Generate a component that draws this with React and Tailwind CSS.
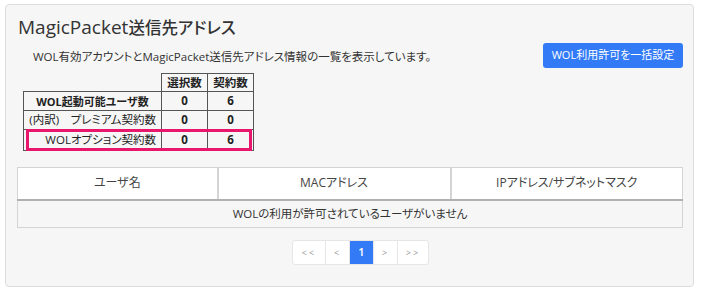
import React from 'react';

const font = { fontFamily: '"Open Sans", "Noto Sans CJK JP", sans-serif', fontFeatureSettings: '"palt"' };

const SummaryTable = () => {
  const rows = [
    { label: 'WOL起動可能ユーザ数', sel: 0, con: 6, cls: 'text-center font-bold text-[11px]' },
    { label: '(内訳)　プレミアム契約数', sel: 0, con: 0, cls: 'text-right pr-[5px]' },
    { label: 'WOLオプション契約数', sel: 0, con: 6, cls: 'text-right pr-[5px]' },
  ];

  return (
    <div className="relative w-fit ml-[6px] mt-[5px]">
      <table className="border-collapse text-[11.5px] text-[#222] leading-none whitespace-nowrap">
        <thead>
          <tr className="h-[18px]">
            <th className="w-[138px]"></th>
            <th className="w-[46px] border border-[#555] font-bold">選択数</th>
            <th className="w-[46px] border border-[#555] font-bold">契約数</th>
          </tr>
        </thead>
        <tbody>
          {rows.map((r, i) => (
            <tr key={i} className={i === 2 ? 'h-[21px]' : 'h-[19px]'}>
              <td className={`border border-[#555] ${r.cls}`}>{r.label}</td>
              <td className="border border-[#555] text-center font-bold">{r.sel}</td>
              <td className="border border-[#555] text-center font-bold">{r.con}</td>
            </tr>
          ))}
        </tbody>
      </table>
      {/* highlighted row */}
      <div className="absolute left-[3px] right-[2px] bottom-0 h-[22px] border-[3px] border-[#e8176c] pointer-events-none"></div>
    </div>
  );
};

const Pagination = () => {
  const items = ['<<', '<', '1', '>', '>>'];
  const widths = ['w-[32px]', 'w-[24px]', 'w-[24px]', 'w-[24px]', 'w-[31px]'];
  return (
    <div className="flex justify-center mt-[12px]">
      <div className="flex ml-[21px] rounded-[3px] border border-[#e6e6e6] overflow-hidden bg-white">
        {items.map((t, i) => (
          <div
            key={i}
            className={`${widths[i]} h-[23px] flex items-center justify-center text-[9px] tracking-[2px] ${
              i > 0 ? 'border-l border-[#e6e6e6]' : ''
            } ${t === '1' ? 'bg-[#337bf6] text-white text-[11px] font-semibold tracking-normal border-[#337bf6]' : 'text-[#999]'}`}
          >
            {t}
          </div>
        ))}
      </div>
    </div>
  );
};

export default function App() {
  return (
    <div className="bg-white w-[704px] h-[293px] pt-[4px] pl-[5px]" style={font}>
      <div className="w-[689px] h-[283px] bg-[#f6f6f6] border border-[#dddddd] rounded-[4px] pt-[9px] pl-[11px] pr-[10px]">
        <h1 className="ml-[1px] text-[19px] leading-[26px] text-[#333] font-medium">
          MagicPacket<span className="text-[16.5px]">送信先アドレス</span>
        </h1>

        <div className="flex items-center justify-between mt-[2px]">
          <p className="ml-[16px] text-[11.5px] text-[#333] mt-[3px]">
            WOL有効アカウントとMagicPacket送信先アドレス情報の一覧を表示しています。
          </p>
          <button className="w-[140px] h-[25px] rounded-[3px] bg-[#337bf6] text-white text-[11px]">
            WOL利用許可を一括設定
          </button>
        </div>

        <SummaryTable />

        <table className="w-[666px] mt-[16px] border-collapse text-[12px] text-[#444]">
          <thead>
            <tr className="h-[32px] bg-white">
              <th className="w-[200px] font-normal border border-[#d4d4d4] border-b-2 border-b-[#b0b0b0] border-r-2">ユーザ名</th>
              <th className="w-[233px] font-normal border border-[#d4d4d4] border-b-2 border-b-[#b0b0b0] border-r-2">MACアドレス</th>
              <th className="font-normal border border-[#d4d4d4] border-b-2 border-b-[#b0b0b0]">IPアドレス/サブネットマスク</th>
            </tr>
          </thead>
          <tbody>
            <tr className="h-[28px]">
              <td colSpan={3} className="text-center border border-[#d4d4d4] text-[#333] text-[11.5px]">
                WOLの利用が許可されているユーザがいません
              </td>
            </tr>
          </tbody>
        </table>

        <Pagination />
      </div>
    </div>
  );
}
